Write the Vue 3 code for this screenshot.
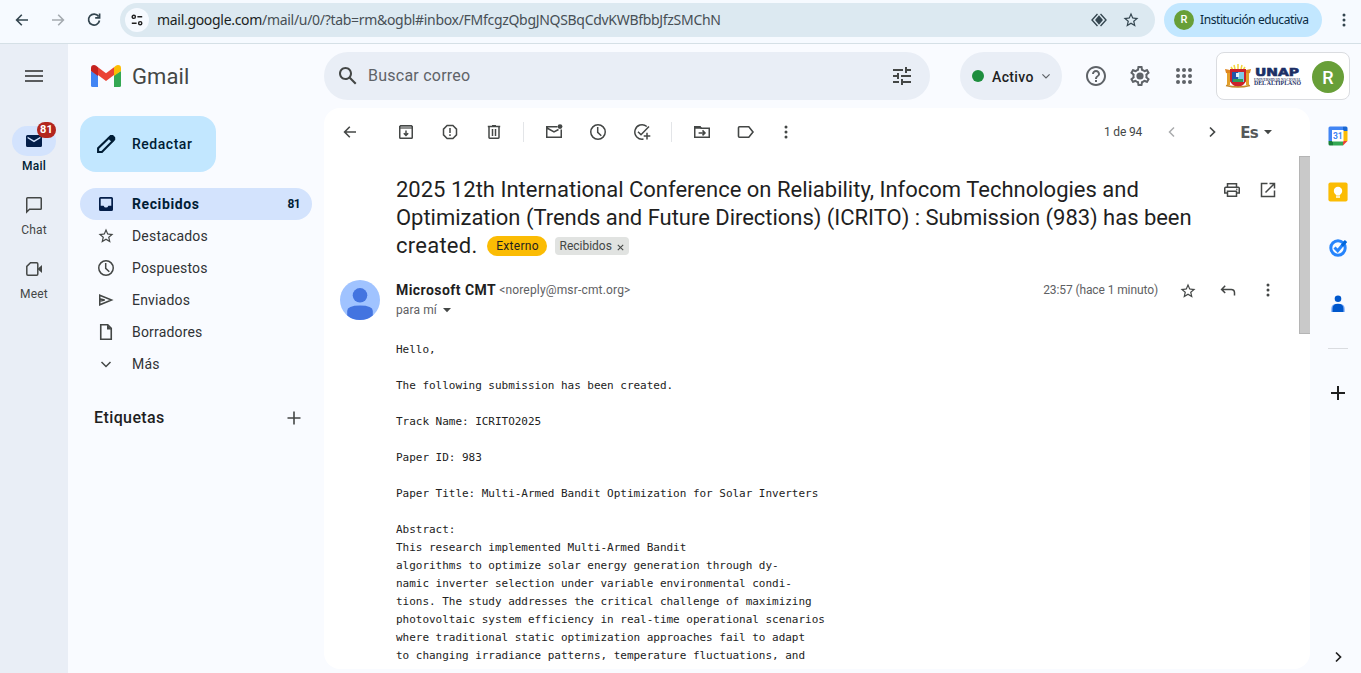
<script setup>
import { h } from 'vue'

const star = '<path fill="currentColor" d="M22 9.24l-7.19-.62L12 2 9.19 8.63 2 9.24l5.46 4.73L5.82 21 12 17.27 18.18 21l-1.63-7.03L22 9.24zM12 15.4l-3.76 2.27 1-4.28-3.32-2.88 4.38-.38L12 6.1l1.71 4.04 4.38.38-3.32 2.88 1 4.28L12 15.4z"/>'
const line = (d, w = 1.5, extra = '') =>
  `<g fill="none" stroke="currentColor" stroke-width="${w}"><path d="${d}"/></g>${extra}`
const dots = (r) => [5, 10, 15].map((y) => `<circle cx="10" cy="${y}" r="${r}" fill="currentColor"/>`).join('')

const icons = {
  back: [20, line('M16 10H4.8M9.8 4.8L4.6 10l5.2 5.2', 1.6)],
  forward: [20, line('M4 10h11.2M10.2 4.8l5.2 5.2-5.2 5.2', 1.6)],
  reload: [20, line('M14.6 6.4A5.5 5.5 0 1 0 15.5 10.5M15.6 3.6v4.2h-4.4', 1.7)],
  site: [20, line('M10.5 6h6M3.5 14h6', 2, '<g fill="none" stroke="currentColor" stroke-width="1.8"><circle cx="6" cy="6" r="2"/><circle cx="14" cy="14" r="2"/></g>')],
  lens: [20, line('M8.3 3.3L2.2 10l6.1 6.7M11.7 3.3L17.8 10l-6.1 6.7', 1.5, '<path fill="currentColor" d="M10 4.6L14.4 10 10 15.4 5.6 10z"/>')],
  star: [24, star],
  dots: [20, dots(1.5)],
  menu: [24, '<path fill="currentColor" d="M3 6h18v2H3zM3 11h18v2H3zM3 16h18v2H3z"/>'],
  search: [24, '<path fill="currentColor" d="M20.49 19l-5.73-5.73C15.53 12.2 16 10.91 16 9.5 16 5.91 13.09 3 9.5 3S3 5.91 3 9.5 5.91 16 9.5 16c1.41 0 2.7-.47 3.77-1.24L19 20.49 20.49 19zM5 9.5C5 7.01 7.01 5 9.5 5S14 7.01 14 9.5 11.99 14 9.5 14 5 11.99 5 9.5z"/>'],
  tune: [24, '<path fill="currentColor" d="M3 17v2h6v-2H3zM3 5v2h10V5H3zm10 16v-2h8v-2h-8v-2h-2v6h2zM7 9v2H3v2h4v2h2V9H7zm14 4v-2H11v2h10zm-6-4h2V7h4V5h-4V3h-2v6z"/>'],
  chev: [20, line('M5.5 8l4.5 4.5L14.5 8')],
  left: [20, line('M12 5.5L7.5 10l4.5 4.5')],
  right: [20, line('M8 5.5l4.5 4.5L8 14.5', 1.7)],
  help: [24, '<path fill="currentColor" d="M11 18h2v-2h-2v2zm1-16C6.48 2 2 6.48 2 12s4.48 10 10 10 10-4.48 10-10S17.52 2 12 2zm0 18c-4.41 0-8-3.59-8-8s3.59-8 8-8 8 3.59 8 8-3.59 8-8 8zm0-14c-2.21 0-4 1.79-4 4h2c0-1.1.9-2 2-2s2 .9 2 2c0 2-3 1.75-3 5h2c0-2.25 3-2.5 3-5 0-2.21-1.79-4-4-4z"/>'],
  gear: [24, '<path fill="currentColor" d="M19.43 12.98c.04-.32.07-.64.07-.98s-.03-.66-.07-.98l2.11-1.65c.19-.15.24-.42.12-.64l-2-3.46c-.09-.16-.26-.25-.44-.25-.06 0-.12.01-.17.03l-2.49 1c-.52-.4-1.08-.73-1.69-.98l-.38-2.65C14.46 2.18 14.25 2 14 2h-4c-.25 0-.46.18-.49.42l-.38 2.65c-.61.25-1.17.59-1.69.98l-2.49-1c-.06-.02-.12-.03-.18-.03-.17 0-.34.09-.43.25l-2 3.46c-.13.22-.07.49.12.64l2.11 1.65c-.04.32-.07.65-.07.98s.03.66.07.98l-2.11 1.65c-.19.15-.24.42-.12.64l2 3.46c.09.16.26.25.44.25.06 0 .12-.01.17-.03l2.49-1c.52.4 1.08.73 1.69.98l.38 2.65c.03.24.24.42.49.42h4c.25 0 .46-.18.49-.42l.38-2.65c.61-.25 1.17-.59 1.69-.98l2.49 1c.06.02.12.03.18.03.17 0 .34-.09.43-.25l2-3.46c.12-.22.07-.49-.12-.64l-2.11-1.65zm-1.98-1.71c.04.31.05.52.05.73 0 .21-.02.43-.05.73l-.14 1.13.89.7 1.08.84-.7 1.21-1.27-.51-1.04-.42-.9.68c-.43.32-.84.56-1.25.73l-1.06.43-.16 1.13-.2 1.35h-1.4l-.19-1.35-.16-1.13-1.06-.43c-.43-.18-.83-.41-1.23-.71l-.91-.7-1.06.43-1.27.51-.7-1.21 1.08-.84.89-.7-.14-1.13c-.03-.31-.05-.54-.05-.74s.02-.43.05-.73l.14-1.13-.89-.7-1.08-.84.7-1.21 1.27.51 1.04.42.9-.68c.43-.32.84-.56 1.25-.73l1.06-.43.16-1.13.2-1.35h1.39l.19 1.35.16 1.13 1.06.43c.43.18.83.41 1.23.71l.91.7 1.06-.43 1.27-.51.7 1.21-1.07.85-.89.7.14 1.13z"/><circle cx="12" cy="12" r="3.6" fill="currentColor"/>'],
  apps: [24, [6, 12, 18].map((y) => [6, 12, 18].map((x) => `<circle cx="${x}" cy="${y}" r="2" fill="currentColor"/>`).join('')).join('')],
  archive: [20, line('M3.75 4.6V15.4q0 .85.85.85H15.4q.85 0 .85-.85V4.6L15.4 3.75H4.6zM10 8.5v5M7.8 11.2l2.2 2.2 2.2-2.2', 1.5, '<path fill="currentColor" opacity=".6" d="M4 4.500h12V7H4z"/>')],
  spam: [20, line('M7.1 3.5h5.8l3.6 3.6v5.8l-3.6 3.6H7.1l-3.6-3.6V7.1zM10 6v5M10 12.3V14', 1.5)],
  trash: [20, line('M5 5v10.6q0 .7.7.7h8.6q.7 0 .7-.7V5M3.8 4.6h12.4M8 3.7h4M8.5 7v7M11.5 7v7', 1.5)],
  unread: [20, line('M13.5 4.75H2.75v10.5h14.5V7.5M3 6l7 4 4.5-2.5', 1.5, '<circle cx="16" cy="4.6" r="2.4" fill="currentColor"/>')],
  clock: [20, line('M10 2.75a7.25 7.25 0 1 0 0 14.5a7.25 7.25 0 1 0 0-14.5zM9.7 5v5.4l3.6 3.3', 1.5)],
  addtask: [20, line('M14.8 4.5A7.25 7.25 0 1 0 11.5 17.1M6 9.7l3 3L17 4.5M15 10.8v6.6M11.7 14.1h6.6', 1.5)],
  move: [20, line('M2.75 4.75h5L9.3 6.3h7.95v8.95H2.75zM6.6 10.9h6M10.5 8.4l2.5 2.5-2.5 2.5', 1.5, '<path fill="currentColor" d="M2.5 4h5.8l2 2.8H2.5z"/>')],
  label: [20, line('M3.5 4.75h9.3l4.2 5.25-4.2 5.25H3.5q-1 0-1-1V5.75q0-1 1-1z', 1.6)],
  caret: [10, '<path fill="currentColor" d="M1 3h8L5 7.2z"/>'],
  print: [20, line('M5.5 7.2V3.75h9V7.2M5.5 13H2.75V8.2q0-1 1-1h12.5q1 0 1 1V13H14.5M5.5 11.2h9v5h-9z', 1.5, '<circle cx="14.8" cy="9.3" r=".8" fill="currentColor"/>')],
  open: [20, line('M9.5 3.5h-6v13h13v-6M11.5 3.5h5v5M7.5 12.5l9-9', 1.5)],
  reply: [20, line('M7.2 5.8L3.6 9.4l3.6 3.6M3.8 9.4h9.4q3.3 0 3.3 3.3v2.8', 1.5)],
  mail: [20, '<path fill="currentColor" fill-rule="evenodd" d="M3.5 4h13Q18 4 18 5.500v9q0 1.500-1.500 1.500h-13Q2 16 2 14.500v-9Q2 4 3.500 4zM3.600 5.700v1.600l6.400 4 6.400-4V5.700L10 9.600z"/>'],
  chat: [20, line('M2.75 17V3.500q0-.750.750-.750h13q.750 0 .750.750v10q0 .750-.750.750H5.500z', 1.5)],
  meet: [20, line('M6.500 3.800h6.200q1.100 0 1.100 1.100v10.200q0 1.100-1.100 1.100H3.900q-1.100 0-1.100-1.100V7.400z', 1.5, '<path fill="currentColor" d="M14 9.500L18 6v8l-4-3.500z"/>')],
  pencil: [24, line('M4.1 20v-3.800L16.300 4.500q.8-.8 1.600 0l1.800 1.800q.8.800 0 1.600L7.900 20z', 2.1, '<path fill="currentColor" d="M13.600 6l3-3h2.400l2.200 2.200v2.400l-3 3z"/>')],
  inbox: [20, '<path fill="currentColor" fill-rule="evenodd" d="M4.500 3h11Q17 3 17 4.500v11q0 1.500-1.500 1.500h-11Q3 17 3 15.500v-11Q3 3 4.500 3zM4.700 4.700v7H7.600q.7 1.900 2.400 1.900t2.400-1.900h2.900v-7z"/>'],
  send: [20, line('M3.750 5.200L15.600 10 3.750 14.800zM3.500 8.800L8.700 10l-5.200 1.200', 1.5)],
  draft: [20, line('M4.750 2.750h7l3.500 3.500v11H4.750z', 1.6, '<path fill="currentColor" d="M11 2.500l4.800 5H11z"/>')],
  plus: [20, line('M10 3.500v13M3.500 10h13', 1.6)],
  boldplus: [20, line('M10 3v14M3 10h14', 2)],
  x: [10, line('M2 2l6 6M8 2l-6 6', 1.2)],
  gmail: [30, '<path fill="#4285f4" d="M0 7v14.5Q0 23 1.500 23H7V11z"/><path fill="#34a853" d="M23 11v12h5.500q1.500 0 1.500-1.500V7z"/><path fill="#c5221f" d="M0 4.200Q0 1 3 1q1.200 0 2.200.8L7 3.200V12L0 7z"/><path fill="#fbbc04" d="M30 4.200Q30 1 27 1q-1.200 0-2.200.8L23 3.200V12l7-5z"/><path fill="#ea4335" d="M7 3.200l8 6 8-6V11l-8 6-8-6z"/>'],
  calendar: [20, '<path fill="#4285f4" d="M2 .5h13V5H5v10H.5V2Q.5.5 2 .5z"/><path fill="#1967d2" d="M15 .5h3q1.500 0 1.500 1.500v3H15z"/><path fill="#fbbc04" d="M15 5h4.500v10H15z"/><path fill="#34a853" d="M5 15h10v4.500H5z"/><path fill="#188038" d="M.5 15H5v4.500H2Q.5 19.500.5 18z"/><path fill="#ea4335" d="M15 15h4.500L15 19.500z"/><path fill="#fff" d="M4 4h11.500v11.500H4z"/><text x="9.800" y="13" text-anchor="middle" font-family="Roboto, sans-serif" font-size="8.500" font-weight="700" fill="#4285f4">31</text>'],
  keep: [20, '<rect x=".4" y=".4" width="19.200" height="19.200" rx="2" fill="#fbbc04"/><circle cx="10" cy="9" r="4.200" fill="#fff"/><path fill="#fff" d="M8 11h4v2.500H8zM8 14.200h4v1.500H8z"/>'],
  tasks: [20, '<circle cx="10" cy="10" r="7.200" fill="none" stroke="#2684fc" stroke-width="3"/><path d="M6.500 9.500l3.200 3.200L17.500 3.500" fill="none" stroke="#2684fc" stroke-width="3"/><path d="M14 7.700L18 3" stroke="#0066da" stroke-width="3"/>'],
  contacts: [20, '<circle cx="10" cy="4.800" r="3.300" fill="#0057cc"/><path fill="#7baaf7" d="M3.300 18v-3q0-5 5-5h3.400q5 0 5 5v3z"/><path fill="#0057cc" d="M4.600 18v-3.200q0-5 5.400-5t5.400 5v3.200z"/>'],
  person: [40, '<circle cx="20" cy="20" r="20" fill="#a0c3ff"/><circle cx="20" cy="15.300" r="7.300" fill="#4374e0"/><path fill="#4374e0" d="M7.200 35.400V31q0-5.500 12.800-5.500T32.800 31v4.400A20 20 0 0 1 7.200 35.400z"/>'],
}

function Icon(props) {
  const [box, inner] = icons[props.name]
  const s = props.size || 20
  return h('svg', { viewBox: `0 0 ${box} ${box}`, width: s, height: s, innerHTML: inner, class: 'ic' })
}
Icon.props = ['name', 'size']

const folders = [
  { icon: 'inbox', name: 'Recibidos', count: 81, active: true },
  { icon: 'star', name: 'Destacados', size: 18 },
  { icon: 'clock', name: 'Pospuestos' },
  { icon: 'send', name: 'Enviados' },
  { icon: 'draft', name: 'Borradores' },
  { icon: 'chev', name: 'Más' },
]
const tools = ['archive', 'spam', 'trash', '|', 'unread', 'clock', 'addtask', '|', 'move', 'label', 'dots']
const body = `Hello,

The following submission has been created.

Track Name: ICRITO2025

Paper ID: 983

Paper Title: Multi-Armed Bandit Optimization for Solar Inverters

Abstract:
This research implemented Multi-Armed Bandit
algorithms to optimize solar energy generation through dy-
namic inverter selection under variable environmental condi-
tions. The study addresses the critical challenge of maximizing
photovoltaic system efficiency in real-time operational scenarios
where traditional static optimization approaches fail to adapt
to changing irradiance patterns, temperature fluctuations, and
various component issues across measures inverter gains`
</script>

<template>
  <div class="window">
    <div class="browser">
      <Icon name="back" class="nav" />
      <Icon name="forward" class="nav off" />
      <Icon name="reload" class="nav" />
      <div class="url">
        <span class="site"><Icon name="site" size="16" /></span>
        <span class="addr"><b>mail.google.com</b>/mail/u/0/?tab=rm&amp;ogbl#inbox/FMfcgzQbgJNQSBqCdvKWBfbbJfzSMChN</span>
        <Icon name="lens" size="18" class="lens" />
        <Icon name="star" size="18" />
      </div>
      <div class="profile"><span class="r small">R</span><span class="inst">Institución educativa</span></div>
      <Icon name="dots" class="kebab" />
    </div>

    <div class="app">
      <nav class="rail">
        <Icon name="menu" size="24" class="burger" />
        <div class="tab on">
          <span class="pill"><Icon name="mail" /><span class="badge">81</span></span>
          <span>Mail</span>
        </div>
        <div class="tab"><span class="pill"><Icon name="chat" /></span><span>Chat</span></div>
        <div class="tab"><span class="pill"><Icon name="meet" /></span><span>Meet</span></div>
      </nav>

      <aside class="side">
        <div class="brand"><Icon name="gmail" size="30" /><span>Gmail</span></div>
        <div class="compose"><Icon name="pencil" size="24" /><span>Redactar</span></div>
        <div v-for="f in folders" :key="f.name" class="folder" :class="{ active: f.active }">
          <span class="fi"><Icon :name="f.icon" :size="f.size" /></span>
          <span class="fn">{{ f.name }}</span>
          <span v-if="f.count" class="count">{{ f.count }}</span>
        </div>
        <div class="labels"><span>Etiquetas</span><Icon name="plus" /></div>
      </aside>

      <div class="content">
        <header class="top">
          <div class="search">
            <Icon name="search" size="24" /><span>Buscar correo</span><Icon name="tune" size="24" class="push" />
          </div>
          <div class="status"><i></i><span>Activo</span><Icon name="chev" size="16" /></div>
          <Icon name="help" size="24" class="help" />
          <Icon name="gear" size="24" class="gear" />
          <Icon name="apps" size="24" class="apps" />
          <div class="account">
            <svg class="unap" viewBox="0 0 80 26" width="80" height="26">
              <path d="M5 7h18v12H5z" fill="#f0c02c" />
              <path d="M7 4l2 3M14 1v5M21 4l-2 3M10 2l1 4M18 2l-1 4" stroke="#f2d43a" stroke-width="1.500" />
              <path d="M1 6l5 1v4l-4-1zM27 6l-5 1v4l4-1z" fill="#e0861f" />
              <path d="M4.500 10v12M23.500 10v12" stroke="#e3a02a" stroke-width="3" />
              <path d="M6 6h16v12q-2 5-8 6-6-1-8-6z" fill="#cc2229" />
              <path d="M8 9h6v10H8z" fill="#2255a8" />
              <path d="M14 9h6v10h-6z" fill="#7ec9e8" />
              <path d="M9 16h10v3H9z" fill="#2f9e58" />
              <path d="M12 10h3v4h-3z" fill="#e9f2f7" />
              <path d="M2 22.500q12 3 24 0" fill="none" stroke="#c78a2b" stroke-width="1.500" />
              <text x="31" y="13" textLength="44" lengthAdjust="spacingAndGlyphs" class="u1">UNAP</text>
              <text x="30" y="17.600" textLength="47" lengthAdjust="spacingAndGlyphs" class="u2">UNIVERSIDAD NACIONAL</text>
              <text x="30" y="22.300" textLength="47" lengthAdjust="spacingAndGlyphs" class="u3">DEL ALTIPLANO</text>
            </svg>
            <span class="r">R</span>
          </div>
        </header>

        <div class="lower">
          <main class="panel">
            <div class="toolbar">
              <Icon name="back" class="goback" />
              <template v-for="(t, i) in tools" :key="i">
                <span v-if="t === '|'" class="sep"></span>
                <Icon v-else :name="t" :class="{ more: t === 'dots' }" />
              </template>
              <span class="pager">1 de 94</span>
              <Icon name="left" class="prev" />
              <Icon name="right" class="next" />
              <span class="lang">Es</span>
              <Icon name="caret" size="10" class="lc" />
            </div>
            <div class="scroll">
              <div class="message">
                <div class="subject">
                  <h2>
                    <span class="t1">2025 12th International Conference on Reliability, Infocom Technologies and</span><br />
                    <span class="t2">Optimization (Trends and Future Directions) (ICRITO) : Submission (983) has been</span><br />
                    <span class="last"><span class="t3">created.</span><span class="ext">Externo</span><span class="inb">Recibidos<Icon name="x" size="9" /></span></span>
                  </h2>
                  <Icon name="print" /><Icon name="open" class="open" />
                </div>
                <div class="sender">
                  <Icon name="person" size="40" />
                  <div class="who">
                    <div class="l1"><b>Microsoft CMT</b><span>&lt;noreply@msr-cmt.org&gt;</span></div>
                    <div class="l2"><span>para mí</span><Icon name="caret" size="10" /></div>
                  </div>
                  <div class="meta">
                    <span>23:57 (hace 1 minuto)</span><Icon name="star" size="18" class="fav" /><Icon name="reply" /><Icon name="dots" />
                  </div>
                </div>
                <pre>{{ body }}</pre>
              </div>
              <div class="thumb"></div>
            </div>
          </main>
          <aside class="addons">
            <Icon name="calendar" /><Icon name="keep" /><Icon name="tasks" /><Icon name="contacts" />
            <hr />
            <Icon name="boldplus" class="add" />
            <Icon name="right" class="hide" />
          </aside>
        </div>
      </div>
    </div>
  </div>
</template>

<style>
body { margin: 0; overflow: hidden; }
</style>

<style scoped>
.window { width: 1361px; height: 673px; overflow: hidden; display: flex; flex-direction: column; background: #f9fbff; font-family: Roboto, sans-serif; color: #444746; font-size: 14px; white-space: nowrap; }
.ic { display: block; flex: none; overflow: visible; }
.browser { box-sizing: border-box; flex: none; height: 44px; display: flex; align-items: center; padding: 0 0 4px 12px; background: #f6faff; border-bottom: 1px solid #d5e0e6; color: #33454f; }
.nav { margin-right: 16px; }
.off { color: #a5abb0; }
.url { box-sizing: border-box; width: 1035px; height: 34px; border-radius: 17px; background: #dce9f1; display: flex; align-items: center; padding: 0 15px 0 5px; }
.site { width: 24px; height: 24px; border-radius: 50%; background: #f6faff; display: flex; align-items: center; justify-content: center; color: #1f1f1f; }
.addr { font: 14px "Noto Sans", sans-serif; color: #474f55; margin-left: 8px; letter-spacing: -.305px; }
.addr b { font-weight: 400; color: #1b1f22; }
.lens { margin-left: auto; margin-right: 14px; }
.profile { box-sizing: border-box; width: 158px; height: 34px; border-radius: 17px; background: #c2e7ff; margin-left: 9px; display: flex; align-items: center; padding-left: 10px; color: #0a2b3f; font: 12px "Noto Sans", sans-serif; letter-spacing: -.42px; }
.r { width: 32px; height: 32px; border-radius: 50%; background: #689f38; color: #fff; display: flex; align-items: center; justify-content: center; font: 500 18px Roboto, sans-serif; letter-spacing: 0; }
.r.small { width: 20px; height: 20px; font-size: 11px; margin-right: 6px; }
.kebab { margin-left: 12px; }

.app { flex: 1; min-height: 0; display: flex; }
.rail { width: 68px; background: #e9eef6; display: flex; flex-direction: column; align-items: center; }
.burger { margin: 20px 0 38px; color: #5a5c5e; }
.tab { height: 64px; display: flex; flex-direction: column; align-items: center; font-size: 12px; letter-spacing: .2px; }
.tab > span:last-child { line-height: 16px; margin-top: 2px; }
.pill { position: relative; width: 44px; height: 30px; border-radius: 15px; display: flex; align-items: center; justify-content: center; }
.on { color: #001d35; font-weight: 500; }
.on .pill { background: #d3e3fd; }
.on .ic { color: #041e49; }
.badge { position: absolute; left: 25px; top: -4px; width: 19px; height: 16px; border-radius: 8px; background: #b3261e; color: #fff; font: 700 11px/16px Roboto, sans-serif; text-align: center; }

.side { box-sizing: border-box; width: 256px; padding: 0 12px; }
.brand { height: 64px; margin-bottom: 8px; display: flex; align-items: center; padding-left: 11px; font-size: 22px; letter-spacing: .1px; }
.brand .ic { margin-top: 6px; margin-right: 11px; }
.compose { box-sizing: border-box; width: 136px; height: 56px; border-radius: 16px; background: #c2e7ff; display: flex; align-items: center; padding-left: 14px; gap: 14px; color: #001d35; font-weight: 500; letter-spacing: .52px; margin-bottom: 16px; }
.folder { height: 32px; display: flex; align-items: center; border-radius: 16px; color: #303235; padding: 0 12px 0 16px; }
.fi { width: 20px; display: flex; justify-content: center; color: #444746; }
.fn { margin-left: 16px; letter-spacing: .18px; }
.active { background: #d3e3fd; color: #001d35; font-weight: 700; }
.active .fn { letter-spacing: .6px; }
.active .fi { color: #041e49; }
.count { margin-left: auto; font-size: 12px; letter-spacing: -.6px; }
.labels { margin-top: 22px; height: 32px; padding: 0 8px 0 14px; display: flex; align-items: center; justify-content: space-between; font-size: 16px; color: #1f1f1f; font-weight: 500; }
.labels span { letter-spacing: .4px; margin-top: -2px; }
.labels .ic { color: #444746; }

.content { flex: 1; min-width: 0; display: flex; flex-direction: column; }
.top { height: 64px; display: flex; align-items: center; color: #5f6368; }
.search { box-sizing: border-box; width: 606px; height: 48px; border-radius: 24px; background: #e9eef6; display: flex; align-items: center; padding: 0 16px 0 12px; font-size: 16px; color: #5f6368; }
.search .ic { color: #444746; }
.search span { margin: -1px 0 0 8px; letter-spacing: .24px; }
.push { margin-left: auto; }
.status { box-sizing: border-box; width: 102px; height: 48px; border-radius: 24px; background: #e9eef6; margin-left: 30px; display: flex; align-items: center; padding-left: 12px; color: #1f1f1f; font-weight: 500; }
.status i { width: 12px; height: 12px; border-radius: 50%; background: #1e8e3e; margin-right: 8px; }
.status span { width: 46px; letter-spacing: .35px; margin-top: 2px; }
.status .ic { color: #5f6368; }
.help { margin-left: 22px; }
.gear, .apps { margin-left: 20px; }
.account { box-sizing: border-box; width: 134px; height: 48px; margin-left: 20px; border: 1px solid #dadce0; border-radius: 8px; background: #fff; display: flex; align-items: center; padding-left: 7px; }
.account .r { margin: 1px 0 0 8px; padding-top: 1px; box-sizing: border-box; }
.unap { display: block; }
.u1 { font: 700 10.500px "DejaVu Sans", sans-serif; fill: #1c2f66; stroke: #1c2f66; stroke-width: .6px; }
.u2 { font: 700 4px "Liberation Serif", serif; fill: #3b466e; }
.u3 { font: 700 6px "Liberation Serif", serif; fill: #1c2f66; }

.lower { flex: 1; min-height: 0; display: flex; }
.panel { width: 986px; height: 561px; border-radius: 16px; background: #fff; overflow: hidden; display: flex; flex-direction: column; }
.toolbar { flex: none; height: 48px; box-sizing: border-box; padding: 0 37px 0 16px; display: flex; align-items: center; gap: 24px; }
.goback { margin-right: 12px; }
.more { margin-left: -4px; }
.sep { width: 1px; height: 20px; background: #e3e5e8; margin: 0 -4px 0 -5px; }
.pager { margin-left: auto; font-size: 12px; margin-right: -4px; letter-spacing: -.15px; }
.prev { color: #a9abad; margin-right: -4px; }
.next { margin-right: -6px; }
.lang { font: 700 15px "DejaVu Sans", sans-serif; letter-spacing: -.7px; color: #55585a; margin-top: 2px; }
.lc { margin-left: -19px; }
.scroll { flex: 1; min-height: 0; display: flex; }
.message { flex: 1; min-width: 0; padding: 20px 0 0 16px; }
.thumb { box-sizing: border-box; width: 11px; height: 178px; background: #c9c9c9; border: 1px solid #b5b5b5; border-right: 0; }
.subject { display: flex; align-items: flex-start; padding-left: 56px; height: 104px; }
.subject .ic { margin-top: 4px; }
.subject > .open { margin: 4px 21px 0 16px; }
h2 { flex: 1; margin: 0; font: 400 22px/28px Roboto, sans-serif; color: #1f1f1f; }
.t2 { letter-spacing: -.028px; }
.t3 { letter-spacing: .25px; }
.last { display: flex; align-items: center; height: 28px; }
.ext { font-size: 12px; line-height: 20px; border-radius: 10px; background: #fbbc04; width: 60px; text-align: center; margin-left: 10px; letter-spacing: .3px; }
.inb { box-sizing: border-box; width: 74px; font-size: 12px; line-height: 18px; border-radius: 4px; background: #e1e3e1; color: #444746; margin-left: 8px; padding: 0 4px; display: flex; align-items: center; justify-content: space-between; }
.subject .inb .ic { margin: 2px 0 0; }
.sender { display: flex; height: 61px; }
.who { margin-left: 16px; }
.l1, .l2 { height: 20px; display: flex; align-items: center; font-size: 12px; color: #5e6063; }
.l1 b { font-size: 14px; color: #1f1f1f; margin-right: 3px; letter-spacing: .45px; }
.l1 span { letter-spacing: .17px; }
.l2 span { margin-right: 5px; letter-spacing: .12px; }
.l2 .ic { color: #444746; }
.meta { margin-left: auto; height: 20px; display: flex; align-items: center; gap: 20px; font-size: 12px; color: #5e6063; padding-right: 21px; letter-spacing: -.1px; }
.meta .ic { color: #444746; }
.meta .fav { margin: 1px 1px 0; }
pre { margin: 0 0 0 56px; font: 11px/18px "DejaVu Sans Mono", monospace; letter-spacing: -.025px; color: #222; }

.addons { width: 51px; padding: 18px 0 6px 5px; box-sizing: border-box; display: flex; flex-direction: column; align-items: center; }
.addons > .ic + .ic { margin-top: 36px; }
.addons hr { width: 20px; height: 1px; border: 0; background: #dadce0; margin: 34px 0; }
.add { color: #1f1f1f; }
.addons > .hide.hide { margin-top: auto; color: #1f1f1f; }
</style>
